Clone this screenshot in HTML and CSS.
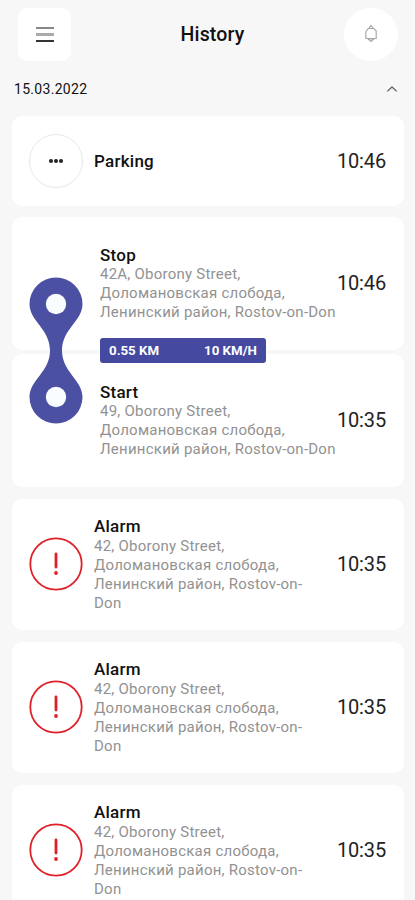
FILE: index.html
```html
<!DOCTYPE html>
<html lang="en">
<head>
<meta charset="utf-8">
<title>History</title>
<link rel="stylesheet" href="styles.css">
</head>
<body>
<header class="topbar">
  <button class="menu" aria-label="Menu"><span class="bar light"></span><span class="bar mid"></span><span class="bar"></span></button>
  <h1>History</h1>
  <button class="bell" aria-label="Notifications">
    <svg width="14" height="20" viewBox="0 0 14 20" fill="none" stroke="#aaa" stroke-width="1.2"><path d="M5 4.200 7 1.500 9 4.200M4.200 4.500h5.600L12.200 7v7.500H1.800V8zM4.200 15 7 17.500l2.800-2.500z"/></svg>
  </button>
</header>
<div class="day">
  <span>15.03.2022</span>
  <svg width="12" height="8" viewBox="0 0 12 8" fill="none" stroke="#666" stroke-width="1.3"><path d="M1.300 6.400 6 2l4.700 4.400"/></svg>
</div>
<main>
  <section class="card parking">
    <div class="dots"><i></i><i></i><i></i></div>
    <div class="info"><h2>Parking</h2></div>
    <time>10:46</time>
  </section>
  <div class="trip">
    <section class="card leg">
      <div class="info"><h2>Stop</h2><p>42A, Oborony Street,<br>Доломановская слобода,<br>Ленинский район, Rostov-on-Don</p></div>
      <time>10:46</time>
    </section>
    <section class="card leg">
      <div class="info"><h2>Start</h2><p>49, Oborony Street,<br>Доломановская слобода,<br>Ленинский район, Rostov-on-Don</p></div>
      <time>10:35</time>
    </section>
    <svg class="link" width="54" height="147" viewBox="0 0 54 147"><path fill="#4b50a2" d="M27 .5a26.500 26.500 0 0 1 26.500 26.500C53.500 44 33 52 33 73.500S53.500 103 53.500 120a26.500 26.500 0 0 1-53 0C.5 103 21 95 21 73.500S.5 44 .5 27A26.500 26.500 0 0 1 27 .5z"/><g fill="#fafdff"><circle cx="27" cy="27" r="10.200"/><circle cx="27" cy="120" r="10.200"/></g></svg>
    <div class="stats"><span>0.55 KM</span><span>10 KM/H</span></div>
  </div>
  <section class="card alarm">
    <svg class="warn" width="54" height="54" viewBox="0 0 54 54"><circle cx="27" cy="27" r="25.700"/><path d="M27 17v13"/><circle class="dot" cx="27" cy="36" r="1.900"/></svg>
    <div class="info"><h2>Alarm</h2><p>42, Oborony Street,<br>Доломановская слобода,<br>Ленинский район, Rostov-on-<br>Don</p></div>
    <time>10:35</time>
  </section>
  <section class="card alarm">
    <svg class="warn" width="54" height="54" viewBox="0 0 54 54"><circle cx="27" cy="27" r="25.700"/><path d="M27 17v13"/><circle class="dot" cx="27" cy="36" r="1.900"/></svg>
    <div class="info"><h2>Alarm</h2><p>42, Oborony Street,<br>Доломановская слобода,<br>Ленинский район, Rostov-on-<br>Don</p></div>
    <time>10:35</time>
  </section>
  <section class="card alarm">
    <svg class="warn" width="54" height="54" viewBox="0 0 54 54"><circle cx="27" cy="27" r="25.700"/><path d="M27 17v13"/><circle class="dot" cx="27" cy="36" r="1.900"/></svg>
    <div class="info"><h2>Alarm</h2><p>42, Oborony Street,<br>Доломановская слобода,<br>Ленинский район, Rostov-on-<br>Don</p></div>
    <time>10:35</time>
  </section>
</main>
</body>
</html>
```
FILE: styles.css
```css
* { box-sizing: border-box; }
html { height: 100%; overflow: hidden; }
body {
  margin: 0;
  height: 900px;
  overflow: hidden;
  background: #f7f7f7;
  color: #111;
  font-family: Roboto, "Liberation Sans", sans-serif;
}
h1, h2, p { margin: 0; }
button { border: 0; padding: 0; background: #fff; }
.topbar {
  display: flex;
  align-items: center;
  justify-content: space-between;
  height: 68px;
  padding: 0 17px 0 18px;
}
.menu {
  display: flex;
  flex-direction: column;
  align-items: center;
  justify-content: center;
  gap: 4px;
  width: 53px;
  height: 53px;
  border-radius: 9px;
}
.bar { width: 18px; height: 2px; background: #333; }
.bar.light { background: #888; }
.bar.mid { height: 3px; background: #aaa; }
h1 { margin: 2px 0 0 10px; font-size: 19.500px; font-weight: 500; line-height: 24px; letter-spacing: .15px; }
.bell {
  display: flex;
  align-items: center;
  justify-content: center;
  width: 54px;
  height: 53px;
  border-radius: 50%;
}
.day {
  display: flex;
  align-items: center;
  justify-content: space-between;
  height: 48px;
  padding: 0 17px 6px 14px;
  font-size: 14px;
  letter-spacing: .3px;
}
main { display: flex; flex-direction: column; gap: 11.500px; padding: 0 11px 0 12px; }
.card {
  display: flex;
  flex: none;
  align-items: center;
  padding: 0 18px 0 17px;
  background: #fff;
  border-radius: 10px;
}
.parking { height: 89.500px; }
.dots {
  display: flex;
  align-items: center;
  justify-content: center;
  gap: 1px;
  width: 54px;
  height: 54px;
  border: 1px solid #e8e8e8;
  border-radius: 50%;
}
.dots i { width: 4px; height: 4px; border-radius: 50%; background: #222; }
.info { flex: 1; margin-left: 11px; white-space: nowrap; }
h2 { font-size: 17px; font-weight: 500; line-height: 20px; letter-spacing: .25px; }
p { position: relative; top: 1px; color: #929292; font-size: 15px; line-height: 19px; letter-spacing: .24px; }
.leg p { top: 0; }
time { font-size: 20px; line-height: 24px; letter-spacing: -.15px; color: #222; }
.trip { position: relative; display: flex; flex-direction: column; gap: 4px; }
.leg { height: 133px; }
.leg .info { margin-left: 71px; }
.leg time { margin-top: -1px; }
.link { position: absolute; left: 17px; top: 60px; }
.stats {
  position: absolute;
  left: 88px;
  top: 121px;
  display: flex;
  align-items: center;
  justify-content: space-between;
  width: 166px;
  height: 25px;
  padding: 0 9px;
  border-radius: 3px;
  background: #4549a0;
  color: #fff;
  font-size: 13.300px;
  font-weight: 700;
}
.alarm { height: 131.500px; }
.warn { fill: none; stroke: #e02028; stroke-width: 1.800; }
.warn path { stroke-width: 2.800; stroke-linecap: round; }
.warn .dot { fill: #e02028; stroke: none; }
```
